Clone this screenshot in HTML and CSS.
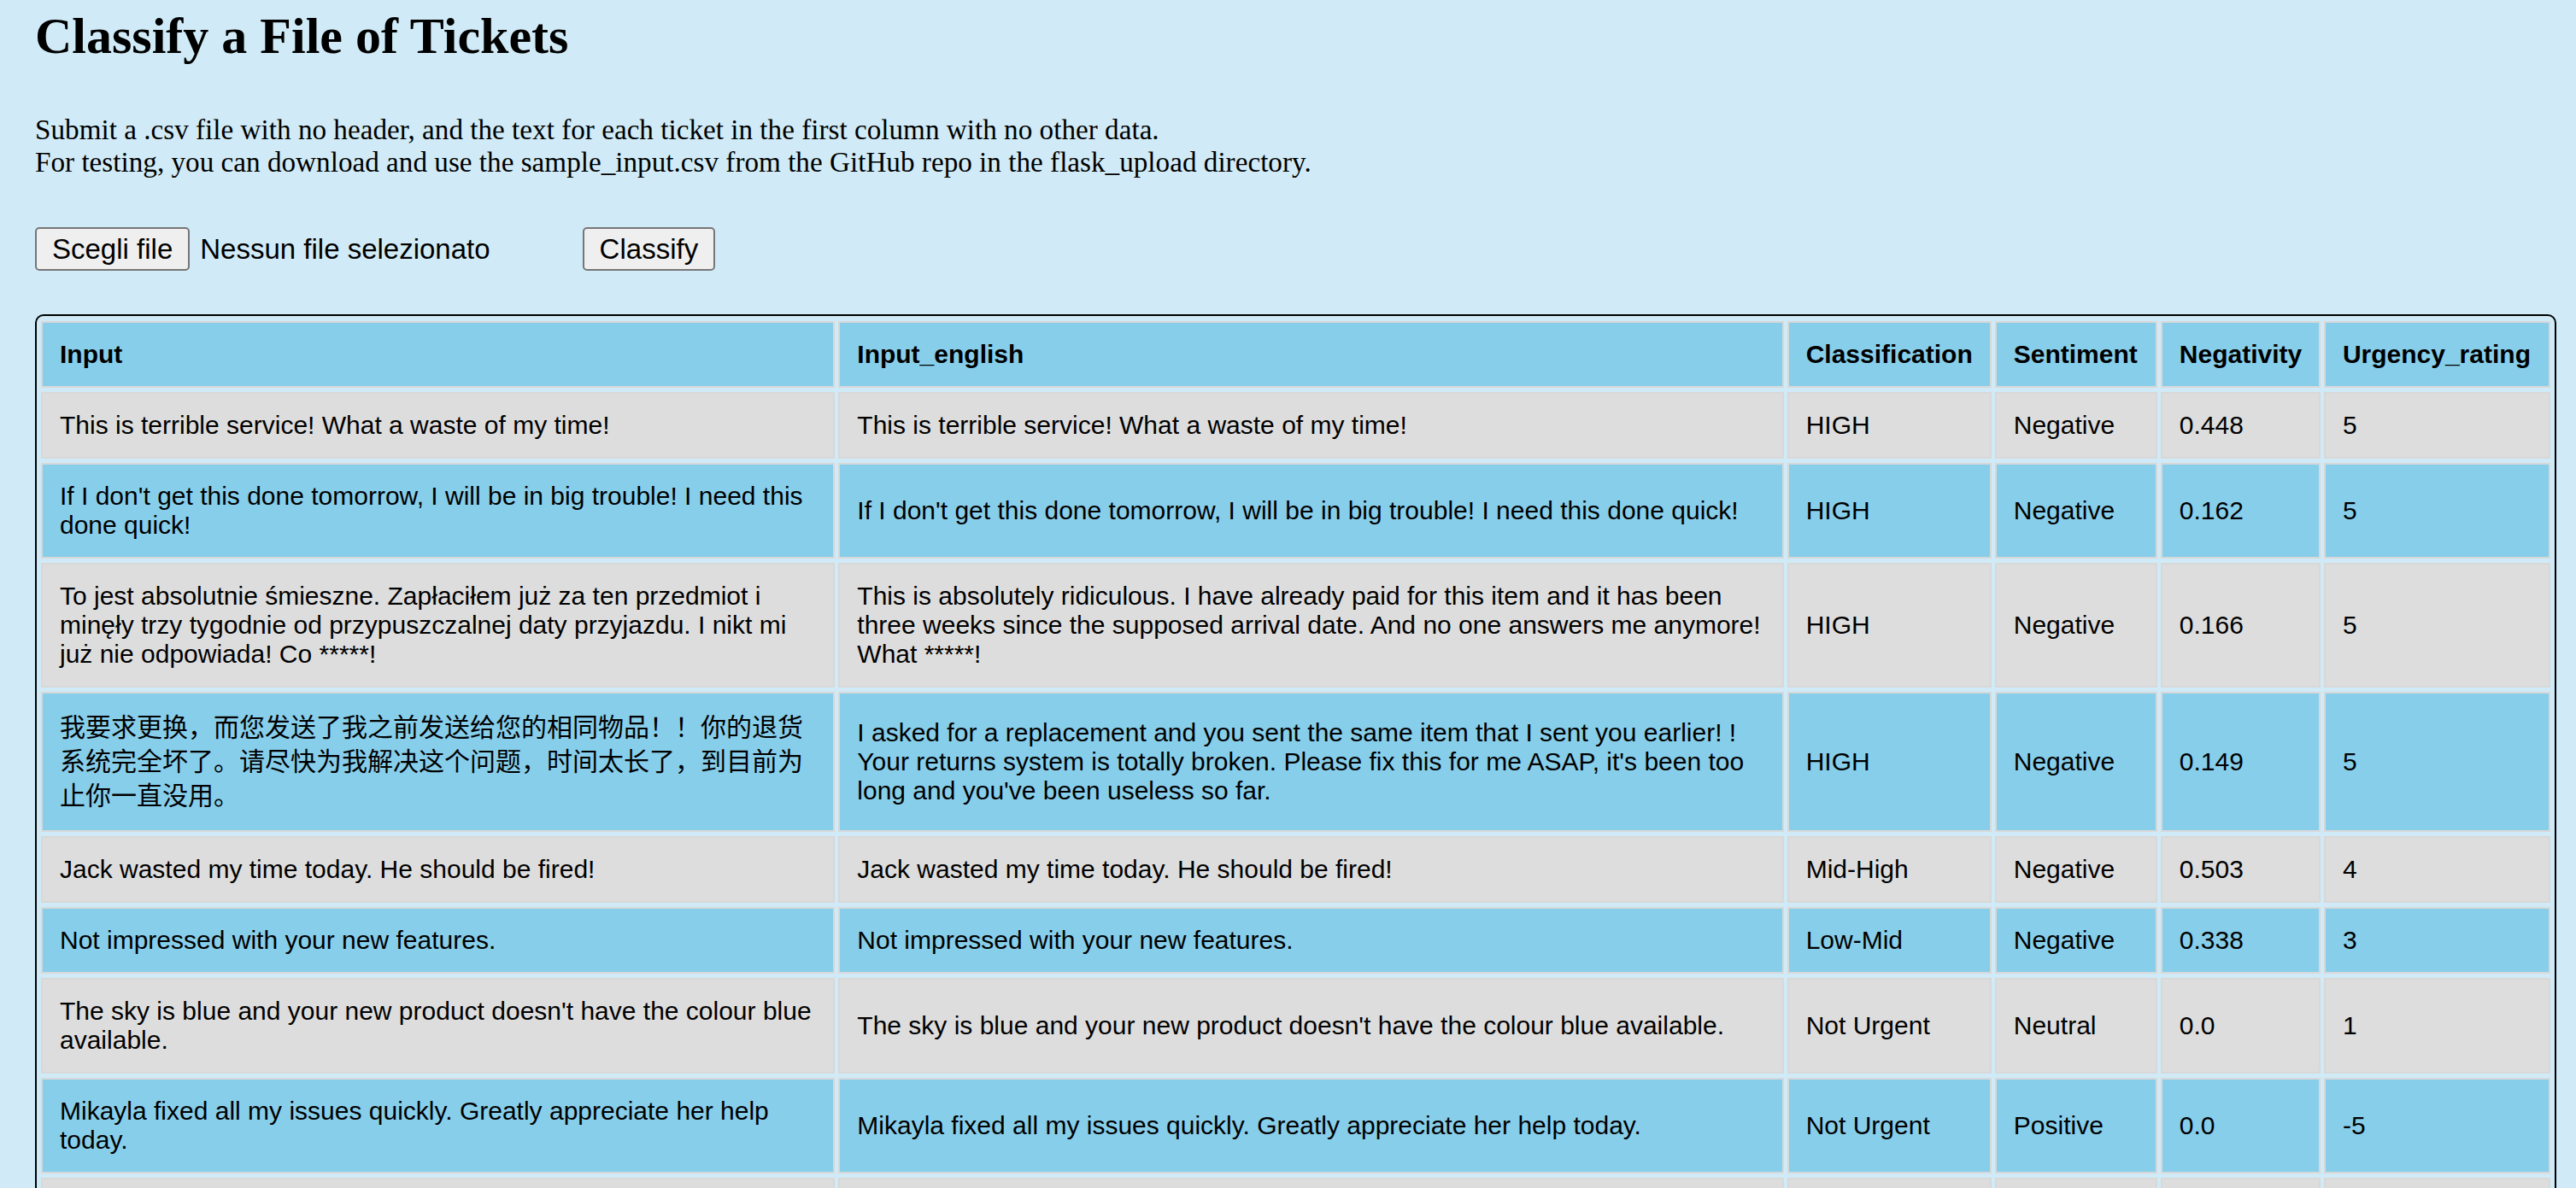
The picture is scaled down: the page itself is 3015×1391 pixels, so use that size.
FILE: index.html
```html
<!DOCTYPE html>
<html lang="en">
<head>
<meta charset="utf-8">
<title>Classify a File of Tickets</title>
<link rel="stylesheet" href="styles.css">
</head>
<body>
<h1 class="title">Classify a File of Tickets</h1>
<p class="intro">Submit a .csv file with no header, and the text for each ticket in the first column with no other data.<br>For testing, you can download and use the sample_input.csv from the GitHub repo in the flask_upload directory.</p>
<form class="upload">
  <span class="file-input">
    <button type="button" class="btn">Scegli file</button>
    <span class="file-name">Nessun file selezionato</span>
  </span>
  <button type="button" class="btn btn-submit">Classify</button>
</form>
<div class="table-wrap">
  <table class="results">
    <thead>
      <tr>
        <th class="col-input">Input</th>
        <th class="col-english">Input_english</th>
        <th class="col-class">Classification</th>
        <th class="col-sent">Sentiment</th>
        <th class="col-neg">Negativity</th>
        <th class="col-urg">Urgency_rating</th>
      </tr>
    </thead>
    <tbody>
      <tr>
        <td>This is terrible service! What a waste of my time!</td>
        <td>This is terrible service! What a waste of my time!</td>
        <td>HIGH</td><td>Negative</td><td>0.448</td><td>5</td>
      </tr>
      <tr>
        <td>If I don't get this done tomorrow, I will be in big trouble! I need this done quick!</td>
        <td>If I don't get this done tomorrow, I will be in big trouble! I need this done quick!</td>
        <td>HIGH</td><td>Negative</td><td>0.162</td><td>5</td>
      </tr>
      <tr>
        <td>To jest absolutnie śmieszne. Zapłaciłem już za ten przedmiot i minęły trzy tygodnie od przypuszczalnej daty przyjazdu. I nikt mi już nie odpowiada! Co *****!</td>
        <td>This is absolutely ridiculous. I have already paid for this item and it has been three weeks since the supposed arrival date. And no one answers me anymore! What *****!</td>
        <td>HIGH</td><td>Negative</td><td>0.166</td><td>5</td>
      </tr>
      <tr>
        <td class="cjk" lang="zh-CN">我要求更换，而您发送了我之前发送给您的相同物品！！你的退货系统完全坏了。请尽快为我解决这个问题，时间太长了，到目前为止你一直没用。</td>
        <td>I asked for a replacement and you sent the same item that I sent you earlier! ! Your returns system is totally broken. Please fix this for me ASAP, it's been too long and you've been useless so far.</td>
        <td>HIGH</td><td>Negative</td><td>0.149</td><td>5</td>
      </tr>
      <tr>
        <td>Jack wasted my time today. He should be fired!</td>
        <td>Jack wasted my time today. He should be fired!</td>
        <td>Mid-High</td><td>Negative</td><td>0.503</td><td>4</td>
      </tr>
      <tr>
        <td>Not impressed with your new features.</td>
        <td>Not impressed with your new features.</td>
        <td>Low-Mid</td><td>Negative</td><td>0.338</td><td>3</td>
      </tr>
      <tr>
        <td>The sky is blue and your new product doesn't have the colour blue available.</td>
        <td>The sky is blue and your new product doesn't have the colour blue available.</td>
        <td>Not Urgent</td><td>Neutral</td><td>0.0</td><td>1</td>
      </tr>
      <tr>
        <td>Mikayla fixed all my issues quickly. Greatly appreciate her help today.</td>
        <td>Mikayla fixed all my issues quickly. Greatly appreciate her help today.</td>
        <td>Not Urgent</td><td>Positive</td><td>0.0</td><td>-5</td>
      </tr>
      <tr>
        <td>Thank you for the quick reply.</td>
        <td>Thank you for the quick reply.</td>
        <td>Not Urgent</td><td>Positive</td><td>0.0</td><td>-5</td>
      </tr>
    </tbody>
  </table>
</div>
</body>
</html>
```
FILE: styles.css
```css
html {
  background: #d0ebf7;
}

body {
  margin: 0;
  padding: 8px 23px 0 41px;
  background: #d0ebf7;
  color: #000;
  font-family: "Liberation Serif", "Times New Roman", serif;
}

.title {
  margin: 0;
  font-size: 60px;
  font-weight: bold;
  line-height: normal;
}

.intro {
  margin: 56px 0 0;
  font-size: 33.2px;
  line-height: normal;
}

.upload {
  display: flex;
  align-items: center;
  margin-top: 57px;
  font-family: "Liberation Sans", Arial, sans-serif;
  font-size: 33px;
}

.file-input {
  display: flex;
  align-items: center;
}

.btn {
  font-family: "Liberation Sans", Arial, sans-serif;
  font-size: 33px;
  line-height: normal;
  color: #000;
  background: #efefef;
  border: 2px solid #767676;
  border-radius: 5px;
  padding: 4.5px 18px;
  margin: 0;
}

.file-name {
  margin-left: 12px;
}

.btn-submit {
  margin-left: 108px;
}

.table-wrap {
  margin-top: 51px;
  border: 2px solid #000;
  border-radius: 10px;
  padding: 1px;
}

.results {
  width: 100%;
  table-layout: fixed;
  border-collapse: separate;
  border-spacing: 4px 5px;
  font-family: "Liberation Sans", Arial, "Noto Sans CJK SC", sans-serif;
  font-size: 30px;
  line-height: normal;
}

.results th,
.results td {
  padding: 20px;
  border: 2px solid #d8d8d8;
  text-align: left;
  vertical-align: middle;
}

.results th {
  font-weight: bold;
  background: #87ceeb;
}

.results tbody tr:nth-child(odd) td {
  background: #dddddd;
}

.results tbody tr:nth-child(even) td {
  background: #87ceeb;
}

.col-input { width: 885px; }
.col-english { width: 1062px; }
.col-class { width: 195px; }
.col-sent { width: 146px; }
.col-neg { width: 143px; }
.col-urg { width: 221px; }

.results td.cjk {
  font-family: "Liberation Sans", Arial, "Noto Sans CJK SC", sans-serif;
  line-height: 40px;
}
```
